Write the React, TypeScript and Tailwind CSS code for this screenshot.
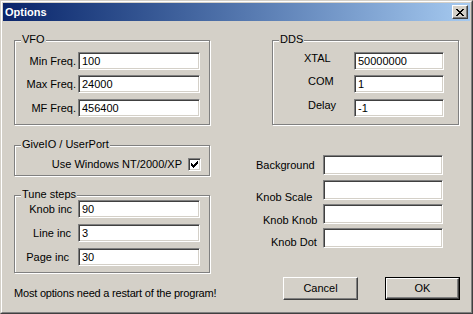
const font = { fontFamily: '"Liberation Sans", Arial, sans-serif' };

const edit =
  "flex items-center bg-white border border-t-[#808080] border-l-[#808080] border-b-white border-r-white shadow-[inset_1px_1px_0_#404040,inset_-1px_-1px_0_#d4d0c8] pl-[3px] text-[11px] leading-[13px] text-black";

const etched =
  "relative border border-[#808080] shadow-[1px_1px_0_#fff,inset_1px_1px_0_#fff]";

function GroupBox({
  title,
  className,
  children,
}: {
  title: string;
  className: string;
  children?: React.ReactNode;
}) {
  return (
    <div className={`${etched} ${className}`}>
      <span className="absolute left-[6px] -top-[8px] bg-[#d4d0c8] px-[1px] text-[11px] leading-[13px] whitespace-nowrap">
        {title}
      </span>
      {children}
    </div>
  );
}

function Button({ label, isDefault }: { label: string; isDefault?: boolean }) {
  const inner = (
    <div className="flex h-full w-full items-center justify-center border border-t-white border-l-white border-b-[#404040] border-r-[#404040] shadow-[inset_-1px_-1px_0_#808080] text-[11px]">
      {label}
    </div>
  );
  if (isDefault) {
    return <div className="h-[23px] w-[75px] border border-black">{inner}</div>;
  }
  return <div className="h-[23px] w-[75px]">{inner}</div>;
}

function CheckMark() {
  // classic 7x7 pixel tick
  const rows = ["......x", ".....xx", "x...xxx", "xx.xxx.", "xxxxx..", ".xxx...", "..x...."];
  return (
    <svg width="7" height="7" viewBox="0 0 7 7" shapeRendering="crispEdges">
      {rows.flatMap((r, y) =>
        r.split("").map((c, x) => (c === "x" ? <rect key={`${x}-${y}`} x={x} y={y} width="1" height="1" fill="#000" /> : null))
      )}
    </svg>
  );
}

export default function App() {
  return (
    <div
      className="h-[314px] w-[473px] border border-t-[#d4d0c8] border-l-[#d4d0c8] border-b-[#404040] border-r-[#404040] text-black"
      style={font}
    >
      <div className="flex h-full w-full flex-col border border-t-white border-l-white border-b-[#808080] border-r-[#808080] bg-[#d4d0c8] p-[1px]">
        {/* title bar */}
        <div className="flex h-[18px] shrink-0 items-center justify-between bg-gradient-to-r from-[#0a246a] to-[#a6caf0] pl-[2px] pr-[2px]">
          <span className="text-[11px] font-bold leading-[13px] text-white">Options</span>
          <div className="flex h-[14px] w-[16px] items-center justify-center border border-t-white border-l-white border-b-[#404040] border-r-[#404040] bg-[#d4d0c8] shadow-[inset_-1px_-1px_0_#808080]">
            <svg width="8" height="7" viewBox="0 0 8 7" shapeRendering="crispEdges">
              <path d="M0 0h2v1h-2zM6 0h2v1h-2zM1 1h2v1h-2zM5 1h2v1h-2zM2 2h4v1h-4zM3 3h2v1h-2zM2 4h4v1h-4zM1 5h2v1h-2zM5 5h2v1h-2zM0 6h2v1h-2zM6 6h2v1h-2z" fill="#000" />
            </svg>
          </div>
        </div>

        {/* client */}
        <div className="flex gap-[46px] pl-[11px] pt-[19px] text-[11px] leading-[13px]">
          {/* left column */}
          <div className="flex w-[196px] flex-col">
            <GroupBox title="VFO" className="h-[85px] pt-[11px]">
              {[
                ["Min Freq.", "100", ""],
                ["Max Freq.", "24000", "mt-[5px]"],
                ["MF Freq.", "456400", "mt-[6px]"],
              ].map(([label, value, mt]) => (
                <div key={label} className={`flex items-center ${mt}`}>
                  <span className="w-[63px] pr-[2px] text-right">{label}</span>
                  <div className={`${edit} h-[18px] w-[122px]`}>{value}</div>
                </div>
              ))}
            </GroupBox>

            <GroupBox title="GiveIO / UserPort" className="mt-[20px] flex h-[31px] items-start justify-end pr-[8px] pt-[11px]">
              <div className="flex items-center">
                <span className="mt-[1px]">Use Windows NT/2000/XP</span>
                <div className="ml-[6px] flex h-[13px] w-[13px] items-center justify-center border border-t-[#808080] border-l-[#808080] border-b-white border-r-white bg-white shadow-[inset_1px_1px_0_#404040,inset_-1px_-1px_0_#d4d0c8]">
                  <CheckMark />
                </div>
              </div>
            </GroupBox>

            <GroupBox title="Tune steps" className="mt-[19px] h-[78px] pt-[4px]">
              {[
                ["Knob inc", "90", "", "pr-[6px]"],
                ["Line inc", "3", "mt-[6px]", "pr-[7px]"],
                ["Page inc", "30", "mt-[6px]", "pr-[9px]"],
              ].map(([label, value, mt, pr]) => (
                <div key={label} className={`flex items-center ${mt}`}>
                  <span className={`w-[63px] text-right ${pr}`}>{label}</span>
                  <div className={`${edit} h-[18px] w-[122px]`}>{value}</div>
                </div>
              ))}
            </GroupBox>

            <p className="mt-[14px] whitespace-nowrap tracking-[-0.2px]">Most options need a restart of the program!</p>
          </div>

          {/* right column */}
          <div className="flex w-[204px] flex-col">
            <GroupBox title="DDS" className="ml-[16px] h-[85px] w-[187px] pt-[11px]">
              {[
                ["XTAL", "50000000", "", "pl-[31px]"],
                ["COM", "1", "mt-[5px]", "pl-[35px]"],
                ["Delay", "-1", "mt-[6px]", "pl-[35px]"],
              ].map(([label, value, mt, pl]) => (
                <div key={label} className={`flex items-start ${mt}`}>
                  <span className={`w-[81px] ${pl}`}>{label}</span>
                  <div className={`${edit} h-[18px] w-[90px]`}>{value}</div>
                </div>
              ))}
            </GroupBox>

            <div className="mt-[30px] flex flex-col">
              {[
                ["Background", "", "pl-0 mt-[4px]"],
                ["Knob Scale", "mt-[5px]", "pl-0 mt-[11px]"],
                ["Knob Knob", "mt-[4px]", "pl-[7px] mt-[10px]"],
                ["Knob Dot", "mt-[4px]", "pl-[15px] mt-[8px]"],
              ].map(([label, mt, lab]) => (
                <div key={label} className={`flex h-[20px] items-start ${mt}`}>
                  <span className={`w-[67px] whitespace-nowrap ${lab}`}>{label}</span>
                  <div className={`${edit} h-[20px] w-[120px]`} />
                </div>
              ))}
            </div>

            <div className="mt-[29px] flex justify-end gap-[27px]">
              <Button label="Cancel" />
              <Button label="OK" isDefault />
            </div>
          </div>
        </div>
      </div>
    </div>
  );
}
